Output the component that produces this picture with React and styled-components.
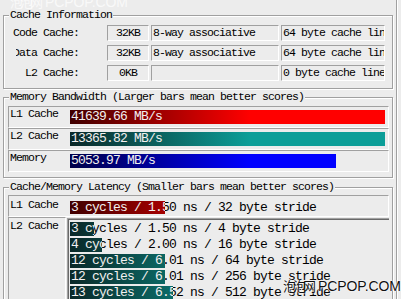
import React from "react";
import styled, { createGlobalStyle } from "styled-components";

const Global = createGlobalStyle`
  html, body { margin: 0; padding: 0; background: #ececec; }
  body { font-family: "Liberation Mono", "Noto Sans CJK SC", monospace; color: #000; }
`;

const Page = styled.div`
  position: relative;
  width: 401px;
  height: 299px;
  overflow: hidden;
  background: #ececec;
`;

const Window = styled.div`
  margin-left: 3px;
  width: 394px;
  height: 299px;
  box-sizing: border-box;
  padding-top: 8px;
  border-right: 1px solid #a0a0a0;
  box-shadow: 1px 0 0 #fff;
`;

const Group = styled.fieldset`
  margin: ${(p) => p.$mt}px 0 0 0;
  padding: ${(p) => p.$pt}px 3px ${(p) => p.$pb}px 4px;
  width: 390px;
  min-width: 0;
  box-sizing: border-box;
  border: 1px solid #a0a0a0;
  box-shadow: inset 1px 1px 0 #fff, 1px 1px 0 #fff;
`;

const Legend = styled.legend`
  margin-left: 1px;
  padding: 0 1px;
  font-size: 11.5px;
  letter-spacing: -0.9px;
  line-height: 14px;
  background: #ececec;
  white-space: nowrap;
`;

const InfoRow = styled.div`
  display: flex;
  height: 16px;
  & + & { margin-top: 4px; }
`;

const InfoLabel = styled.div`
  display: flex;
  justify-content: flex-end;
  overflow: hidden;
  white-space: nowrap;
  width: ${(p) => (p.$clip ? 63 : 71)}px;
  margin-left: ${(p) => (p.$clip ? 8 : 0)}px;
  margin-right: 28px;
  font-size: 11.5px;
  letter-spacing: -0.9px;
  line-height: 16px;
`;

const ValueBox = styled.div`
  width: ${(p) => p.$w}px;
  height: 16px;
  box-sizing: border-box;
  margin-right: 2px;
  border-top: 1px solid #a0a0a0;
  border-left: 1px solid #a0a0a0;
  border-bottom: 1px solid #fff;
  border-right: 1px solid #fff;
  overflow: hidden;
  white-space: nowrap;
  text-align: ${(p) => (p.$center ? "center" : "left")};
  padding-left: ${(p) => (p.$center ? 0 : 1)}px;
  font-size: 11.5px;
  letter-spacing: -0.9px;
  line-height: 14px;
`;

const BarRow = styled.div`
  display: flex;
  align-items: flex-start;
  height: 22px;
  box-sizing: border-box;
  padding-right: 3px;
  border-top: 1px solid #a0a0a0;
  border-left: 1px solid #a0a0a0;
  border-bottom: 1px solid #fff;
  border-right: 1px solid #fff;
`;

const RowLabel = styled.div`
  width: 61px;
  flex: none;
  box-sizing: border-box;
  padding: ${(p) => p.$pt || 0}px 0 0 1px;
  font-size: 11.5px;
  letter-spacing: -0.9px;
  line-height: 14px;
  white-space: nowrap;
`;

const Track = styled.div`
  position: relative;
  flex: ${(p) => (p.$grow ? "1 1 auto" : "none")};
  height: ${(p) => p.$h}px;
  margin-top: ${(p) => p.$mt || 0}px;
  margin-bottom: ${(p) => p.$mb || 0}px;
  font-size: 13px;
  letter-spacing: -0.8px;
  line-height: ${(p) => p.$h}px;
  white-space: nowrap;
`;

const Caption = styled.span`
  display: block;
  padding-left: 1px;
  color: ${(p) => (p.$light ? "#f3f0f0" : "#000")};
`;

const gradients = {
  red: "linear-gradient(to right, #400000 0px, #ff0000 180px, #ff0000 100%)",
  teal: "linear-gradient(to right, #0a2828 0px, #0c9e98 180px, #0c9e98 100%)",
  blue: "linear-gradient(to right, #000048 0px, #0000ff 180px, #0000ff 100%)",
};

const Fill = styled.div`
  position: absolute;
  left: 0;
  top: 0;
  bottom: 0;
  overflow: hidden;
  background: ${(p) => gradients[p.$tone]};
`;

const SplitRow = styled.div`
  display: flex;
  gap: 1px;
  height: 110px;
`;

const LabelCell = styled.div`
  width: 58px;
  flex: none;
  box-sizing: border-box;
  padding: 1px 0 0 1px;
  border-top: 1px solid #a0a0a0;
  border-left: 1px solid #a0a0a0;
  border-bottom: 1px solid #fff;
  border-right: 1px solid #fff;
  font-size: 11.5px;
  letter-spacing: -0.9px;
  line-height: 14px;
  white-space: nowrap;
`;

const ListBox = styled.div`
  flex: 1;
  display: flex;
  flex-direction: column;
  box-sizing: border-box;
  margin-top: 1px;
  padding: 3px 2px 0 2px;
  border-top: 1px solid #a0a0a0;
  border-left: 1px solid #a0a0a0;
  box-shadow: inset 1px 1px 0 #696969;
`;

const Watermark = styled.div`
  position: absolute;
  left: ${(p) => p.$x}px;
  top: ${(p) => p.$y}px;
  white-space: nowrap;
  color: ${(p) => (p.$faint ? "rgba(255,255,255,0.7)" : "#111")};
  text-shadow: ${(p) => (p.$faint ? "none" : "0 0 2px #fff, 0 0 1px #fff, 0 0 1px #fff")};
  line-height: 16px;
`;

const WmCjk = styled.span`
  font-family: "Noto Sans CJK SC", sans-serif;
  font-size: 13px;
  letter-spacing: -3px;
`;

const WmLatin = styled.span`
  font-family: "Liberation Sans", Arial, sans-serif;
  font-size: 14px;
  letter-spacing: -0.1px;
  margin-left: 5px;
`;

function Bar({ tone, width, text, h, mt, mb, grow }) {
  return (
    <Track $h={h} $mt={mt} $mb={mb} $grow={grow}>
      <Caption>{text}</Caption>
      <Fill $tone={tone} style={{ width }}>
        <Caption $light>{text}</Caption>
      </Fill>
    </Track>
  );
}

const info = [
  { label: "Code Cache:", size: "32KB", assoc: "8-way associative", line: "64 byte cache line" },
  { label: "Data Cache:", size: "32KB", assoc: "8-way associative", line: "64 byte cache line", clip: true },
  { label: "L2 Cache:", size: "0KB", assoc: "", line: "0 byte cache line" },
];

const bandwidth = [
  { label: "L1 Cache", tone: "red", width: 315, text: "41639.66 MB/s" },
  { label: "L2 Cache", tone: "teal", width: 315, text: "13365.82 MB/s" },
  { label: "Memory", tone: "blue", width: 266, text: "5053.97 MB/s" },
];

const l2Latency = [
  { width: 24, text: "3 cycles / 1.50 ns / 4 byte stride" },
  { width: 32, text: "4 cycles / 2.00 ns / 16 byte stride" },
  { width: 95, text: "12 cycles / 6.01 ns / 64 byte stride" },
  { width: 95, text: "12 cycles / 6.01 ns / 256 byte stride" },
  { width: 103, text: "13 cycles / 6.52 ns / 512 byte stride" },
];

export default function App() {
  return (
    <Page>
      <Global />
      <Watermark $x={10} $y={-6} $faint>
        <WmCjk>泡泡网</WmCjk>
        <WmLatin>PCPOP.COM</WmLatin>
      </Watermark>
      <Window>
        <Group $mt={0} $pt={3} $pb={7}>
          <Legend>Cache Information</Legend>
          {info.map((r) => (
            <InfoRow key={r.label}>
              <InfoLabel $clip={r.clip}>{r.label}</InfoLabel>
              <ValueBox $w={42} $center>{r.size}</ValueBox>
              <ValueBox $w={128}>{r.assoc}</ValueBox>
              <ValueBox $w={104}>{r.line}</ValueBox>
            </InfoRow>
          ))}
        </Group>

        <Group $mt={1} $pt={2} $pb={5}>
          <Legend>Memory Bandwidth (Larger bars mean better scores)</Legend>
          {bandwidth.map((r) => (
            <BarRow key={r.label}>
              <RowLabel>{r.label}</RowLabel>
              <Bar tone={r.tone} width={r.width} text={r.text} h={14} mt={3} grow />
            </BarRow>
          ))}
        </Group>

        <Group $mt={2} $pt={1} $pb={5}>
          <Legend>Cache/Memory Latency (Smaller bars mean better scores)</Legend>
          <BarRow>
            <RowLabel $pt={2}>L1 Cache</RowLabel>
            <Bar tone="red" width={95} text="3 cycles / 1.50 ns / 32 byte stride" h={13} mt={5} grow />
          </BarRow>
          <SplitRow>
            <LabelCell>L2 Cache</LabelCell>
            <ListBox>
              {l2Latency.map((r) => (
                <Bar key={r.text} tone="teal" width={r.width} text={r.text} h={14} mb={2} />
              ))}
            </ListBox>
          </SplitRow>
        </Group>
      </Window>
      <Watermark $x={283} $y={278}>
        <WmCjk>泡泡网</WmCjk>
        <WmLatin>PCPOP.COM</WmLatin>
      </Watermark>
    </Page>
  );
}
